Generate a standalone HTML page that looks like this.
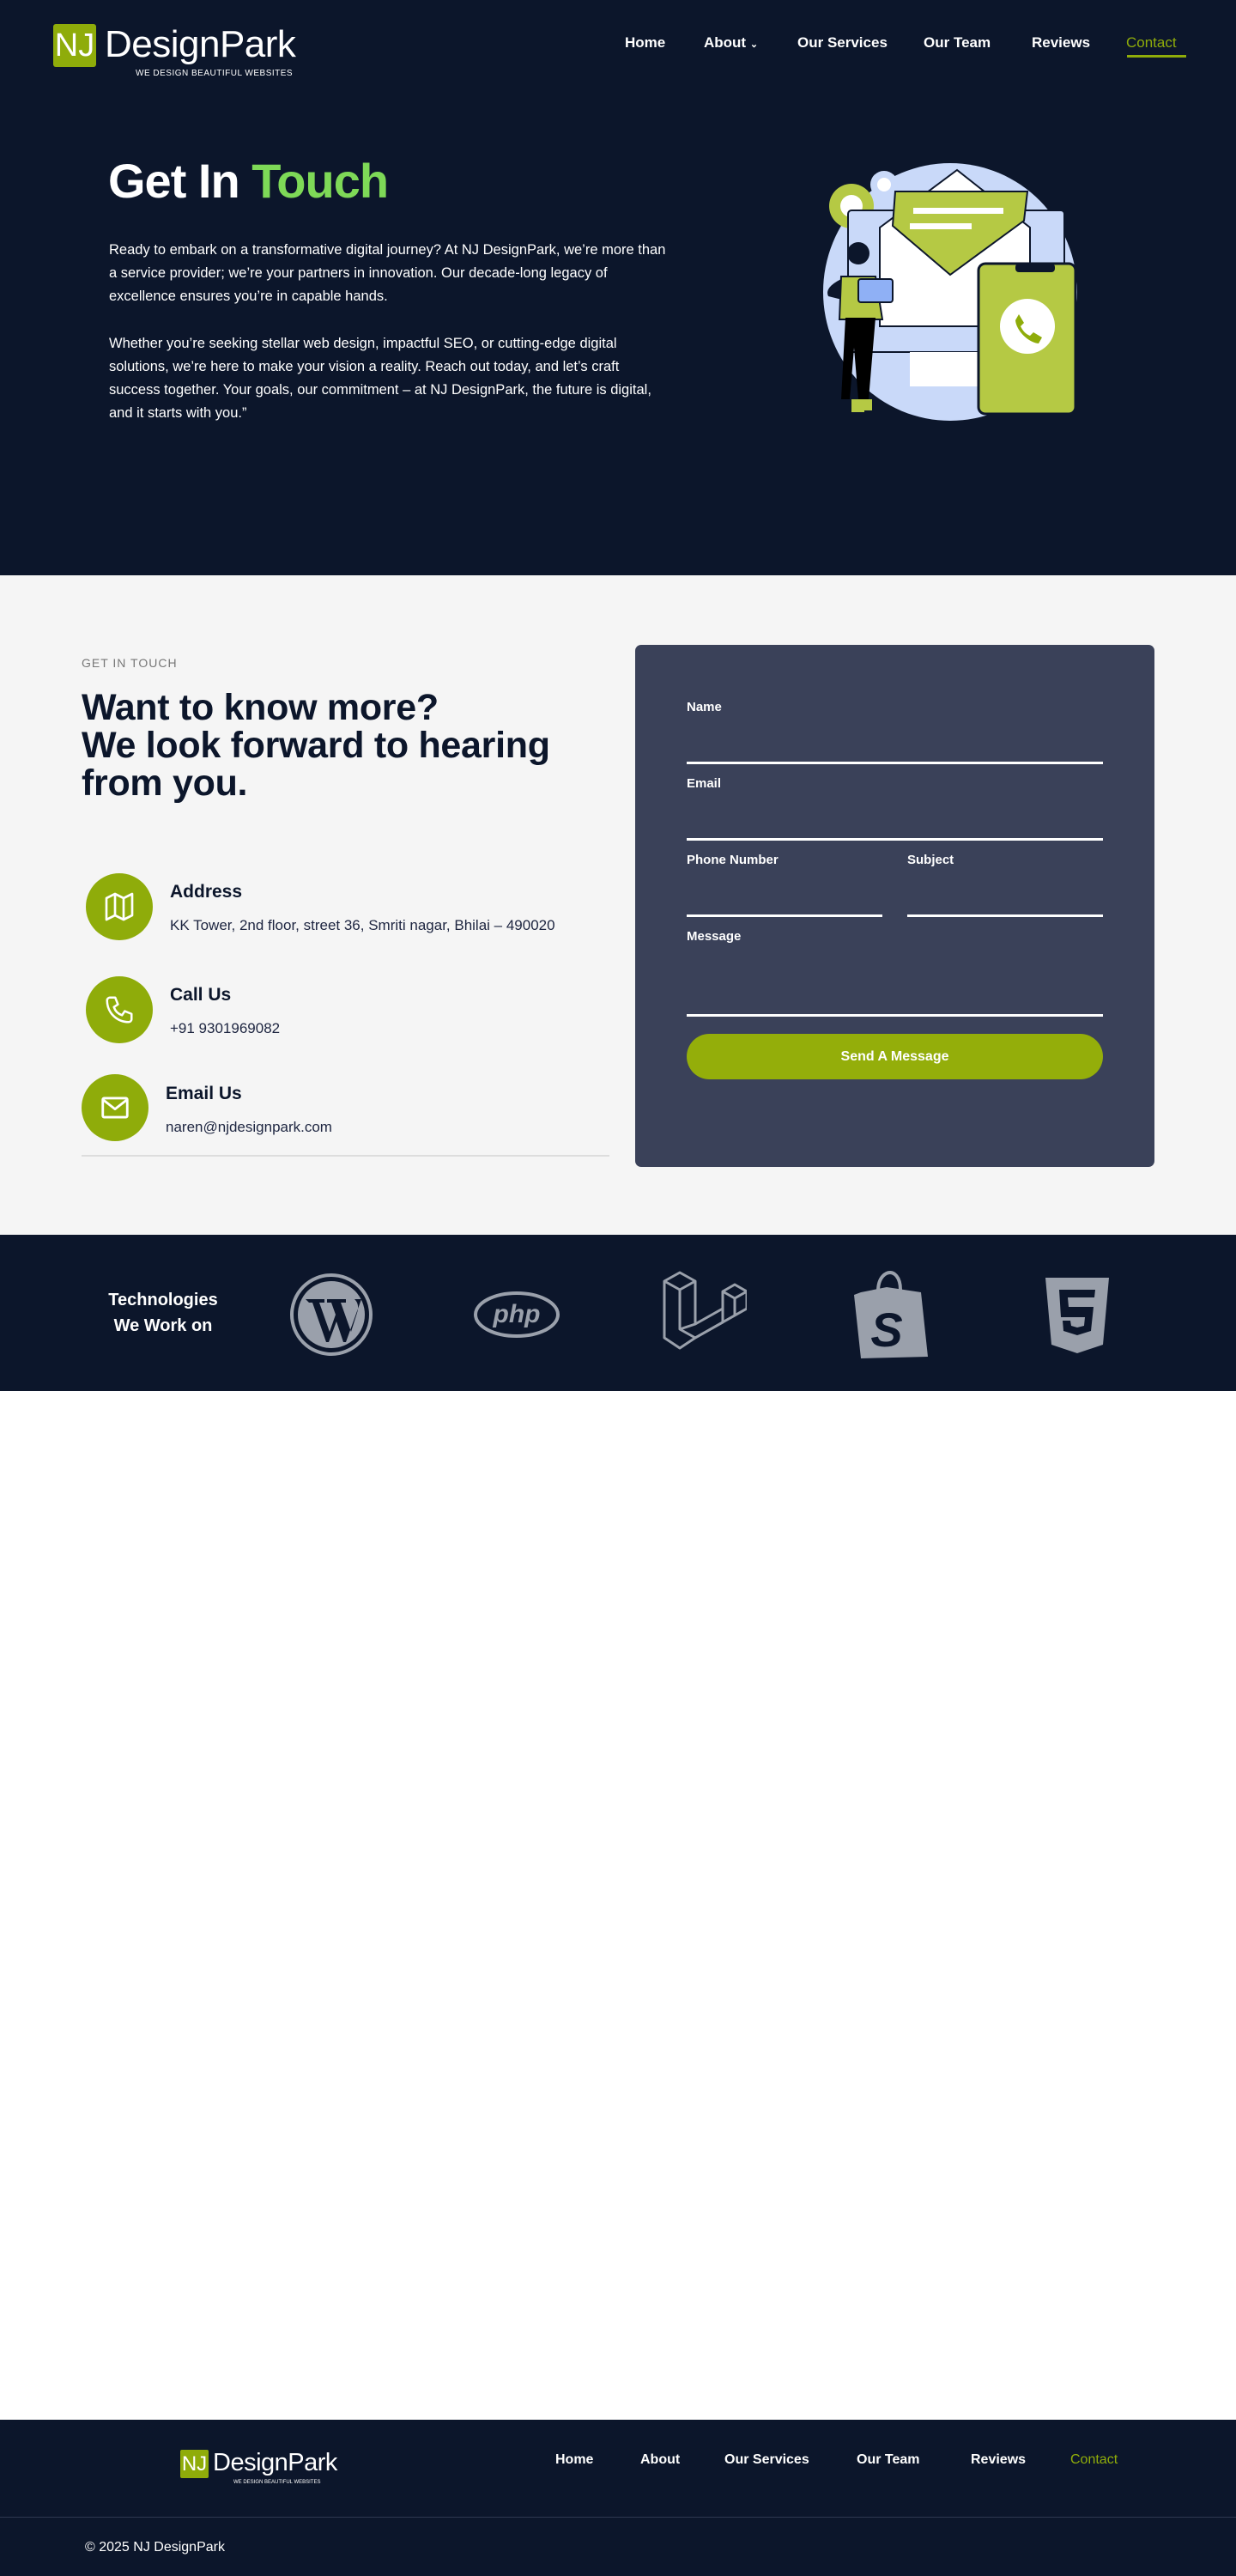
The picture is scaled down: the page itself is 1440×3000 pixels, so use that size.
<!DOCTYPE html>
<html><head><meta charset="utf-8"><style>
*{margin:0;padding:0;box-sizing:border-box}
body{width:1440px;height:3000px;background:#fff;font-family:"Liberation Sans",sans-serif;position:relative;overflow:hidden}
.abs{position:absolute}
.navy{background:#0c162b}
.nav a{color:#fff;font-weight:bold;font-size:17px;text-decoration:none;position:absolute;top:40px;white-space:nowrap}
.p{color:#fff;font-size:16.5px;line-height:27px}
.lbl{color:#fff;font-size:15px;font-weight:bold;position:absolute}
.ln{position:absolute;height:3px;background:#fff}
.circ{position:absolute;width:78px;height:78px;border-radius:50%;background:#8fac0a;display:flex;align-items:center;justify-content:center}
.ct{position:absolute;color:#0c162b;font-weight:bold;font-size:21px}
.cs{position:absolute;color:#1d2540;font-size:17px}
</style></head><body>
<div class="abs navy" style="left:0;top:0;width:1440px;height:670px"></div>
<div class="abs" style="left:62px;top:28px;width:50px;height:50px;background:#8fac0a;border-radius:3px;color:#fff;font-size:38px;line-height:50px;text-align:center">NJ</div>
<div class="abs" style="left:122px;top:26px;color:#fff;font-size:44px;line-height:52px;letter-spacing:-0.5px">DesignPark</div>
<div class="abs" style="left:158px;top:80px;color:#fff;font-size:10px;letter-spacing:0.5px">WE DESIGN BEAUTIFUL WEBSITES</div>
<div class="nav">
<a style="left:728px">Home</a>
<a style="left:820px">About <span style="font-size:11px">⌄</span></a>
<a style="left:929px">Our Services</a>
<a style="left:1076px">Our Team</a>
<a style="left:1202px">Reviews</a>
<a style="left:1312px;color:#8fac0a;font-weight:normal">Contact</a>
</div>
<div class="abs" style="left:1313px;top:64px;width:69px;height:3px;background:#8fac0a"></div>
<div class="abs" style="left:126px;top:178px;color:#fff;font-size:56px;font-weight:bold;letter-spacing:-1px">Get In <span style="color:#7ed957">Touch</span></div>
<div class="abs p" style="left:127px;top:278px;width:655px">Ready to embark on a transformative digital journey? At NJ DesignPark, we’re more than a service provider; we’re your partners in innovation. Our decade-long legacy of excellence ensures you’re in capable hands.</div>
<div class="abs p" style="left:127px;top:387px;width:655px">Whether you’re seeking stellar web design, impactful SEO, or cutting-edge digital solutions, we’re here to make your vision a reality. Reach out today, and let’s craft success together. Your goals, our commitment – at NJ DesignPark, the future is digital, and it starts with you.”</div>
<svg class="abs" style="left:940px;top:170px" width="340" height="330" viewBox="0 0 340 330">
<ellipse cx="167" cy="170" rx="148" ry="150" fill="#c9d9f9"/>
<circle cx="52" cy="70" r="26" fill="#b5c944"/><circle cx="52" cy="70" r="13" fill="#fff"/>
<circle cx="90" cy="45" r="16" fill="#c9d9f9"/><circle cx="90" cy="45" r="8" fill="#fff"/>
<rect x="48" y="75" width="252" height="165" rx="4" fill="#c9d9f9" stroke="#0c162b" stroke-width="2"/>
<rect x="120" y="240" width="80" height="40" fill="#fff"/>
<polygon points="85,95 175,28 260,95 260,210 85,210" fill="#fff" stroke="#0c162b" stroke-width="2"/>
<polygon points="103,53 257,53 253,87 167,150 100,93" fill="#b5c944" stroke="#0c162b" stroke-width="2"/>
<rect x="124" y="72" width="105" height="7" fill="#fff"/><rect x="120" y="90" width="72" height="7" fill="#fff"/>
<rect x="200" y="137" width="113" height="175" rx="8" fill="#b5c944" stroke="#0c162b" stroke-width="3"/>
<rect x="243" y="137" width="46" height="10" rx="4" fill="#0c162b"/>
<circle cx="257" cy="210" r="32" fill="#fff"/>
<path d="M247 196l6 10-4 4c3 6 6 9 11 11l4-4 10 6-4 7c-12-1-26-15-27-27z" fill="#8fac0a"/>
<circle cx="60" cy="125" r="13" fill="#0c162b"/><path d="M40 155 q-20 10-15 20 l20 5z" fill="#0c162b"/>
<path d="M40 152 h40 l8 50 h-50z" fill="#b5c944" stroke="#0c162b" stroke-width="2"/>
<rect x="60" y="155" width="40" height="27" rx="3" fill="#8fb0f5" stroke="#0c162b" stroke-width="2"/>
<path d="M45 200 h35 l-8 95 h-12 l-5-60 -5 60h-10z" fill="#000"/>
<rect x="52" y="295" width="15" height="15" fill="#b5c944"/><rect x="62" y="295" width="14" height="13" fill="#b5c944"/>
</svg>

<div class="abs" style="left:0;top:670px;width:1440px;height:768px;background:#f5f5f5"></div>
<div class="abs" style="left:95px;top:764px;color:#777;font-size:14px;letter-spacing:1px">GET IN TOUCH</div>
<div class="abs" style="left:95px;top:802px;color:#0c162b;font-size:43px;font-weight:bold;line-height:44px;letter-spacing:-0.3px">Want to know more?<br>We look forward to hearing<br>from you.</div>
<div class="circ" style="left:100px;top:1017px"><svg width="40" height="40" viewBox="0 0 24 24" fill="none" stroke="#fff" stroke-width="1.6" stroke-linejoin="round"><path d="M3 6l6-3 6 3 6-3v15l-6 3-6-3-6 3z M9 3v15 M15 6v15"/></svg></div>
<div class="ct" style="left:198px;top:1027px">Address</div>
<div class="cs" style="left:198px;top:1068px">KK Tower, 2nd floor, street 36, Smriti nagar, Bhilai – 490020</div>
<div class="circ" style="left:100px;top:1137px"><svg width="38" height="38" viewBox="0 0 24 24" fill="none" stroke="#fff" stroke-width="1.6" stroke-linejoin="round"><path d="M5 3h4l2 5-3 2c1 3 3 5 6 6l2-3 5 2v4c0 1-1 2-2 2C10 21 3 14 3 5c0-1 1-2 2-2z"/></svg></div>
<div class="ct" style="left:198px;top:1147px">Call Us</div>
<div class="cs" style="left:198px;top:1188px">+91 9301969082</div>
<div class="circ" style="left:95px;top:1251px"><svg width="38" height="38" viewBox="0 0 24 24" fill="none" stroke="#fff" stroke-width="1.8" stroke-linejoin="round"><rect x="3" y="5" width="18" height="14" rx="1"/><path d="M3 6l9 7 9-7"/></svg></div>
<div class="ct" style="left:193px;top:1262px">Email Us</div>
<div class="cs" style="left:193px;top:1303px">naren@njdesignpark.com</div>
<div class="abs" style="left:95px;top:1345px;width:615px;height:2px;background:#ddd"></div>

<div class="abs" style="left:740px;top:751px;width:605px;height:608px;background:#3a4159;border-radius:7px"></div>
<div class="lbl" style="left:800px;top:815px">Name</div><div class="ln" style="left:800px;top:887px;width:485px"></div>
<div class="lbl" style="left:800px;top:904px">Email</div><div class="ln" style="left:800px;top:976px;width:485px"></div>
<div class="lbl" style="left:800px;top:993px">Phone Number</div><div class="ln" style="left:800px;top:1065px;width:228px"></div>
<div class="lbl" style="left:1057px;top:993px">Subject</div><div class="ln" style="left:1057px;top:1065px;width:228px"></div>
<div class="lbl" style="left:800px;top:1082px">Message</div><div class="ln" style="left:800px;top:1181px;width:485px"></div>
<div class="abs" style="left:800px;top:1204px;width:485px;height:53px;border-radius:27px;background:#94ae0a;color:#fff;font-weight:bold;font-size:16px;line-height:53px;text-align:center">Send A Message</div>

<div class="abs navy" style="left:0;top:1438px;width:1440px;height:182px"></div>
<div class="abs" style="left:100px;top:1499px;width:180px;text-align:center;color:#fff;font-weight:bold;font-size:20px;line-height:30px">Technologies<br>We Work on</div>
<svg class="abs" style="left:336px;top:1481px" width="100" height="100" viewBox="0 0 100 100"><circle cx="50" cy="50" r="46" fill="none" stroke="#9aa0ab" stroke-width="4"/><circle cx="50" cy="50" r="39" fill="#9aa0ab"/><path d="M20 32h22v4h-6l12 34 7-20-5-14h-5v-4h22v4h-6l12 34 7-22c3-10-1-14-3-16h8l-18 50h-3l-8-24-9 24h-3l-16-46h-4z" fill="#0c162b"/></svg>
<svg class="abs" style="left:551px;top:1503px" width="102" height="56" viewBox="0 0 102 56"><ellipse cx="51" cy="28" rx="48" ry="25" fill="none" stroke="#9aa0ab" stroke-width="4"/><text x="51" y="37" text-anchor="middle" font-family="Liberation Sans" font-style="italic" font-weight="bold" font-size="30" fill="#9aa0ab">php</text></svg>
<svg class="abs" style="left:770px;top:1478px" width="100" height="102" viewBox="0 0 100 102" fill="none" stroke="#9aa0ab" stroke-width="3" stroke-linejoin="round"><path d="M4 14L22 4L40 14V64L72 46V26L86 18L100 26V46L40 80L22 92L4 80Z"/><path d="M4 14L22 24L40 14M22 24V70L40 80M22 70L40 64M72 26L86 34L100 26M86 34V54M40 80L72 62V46"/></svg>
<svg class="abs" style="left:993px;top:1480px" width="90" height="102" viewBox="0 0 90 102"><path d="M10 25l30-6 40 6 8 75-78 2-8-74z" fill="#9aa0ab"/><path d="M30 24c0-18 10-22 14-22s12 4 12 20" fill="none" stroke="#9aa0ab" stroke-width="4"/><text x="40" y="88" text-anchor="middle" font-family="Liberation Sans" font-weight="bold" font-style="italic" font-size="56" fill="#0c162b">S</text></svg>
<svg class="abs" style="left:1216px;top:1486px" width="78" height="92" viewBox="0 0 78 92"><path d="M2 2h74l-7 78-30 10-30-10z" fill="#9aa0ab"/><path d="M18 16h42l-1 9H28l1 11h29l-3 28-16 5-16-5-1-12h9l1 6 7 2 8-2 1-10H20z" fill="#0c162b"/></svg>

<div class="abs navy" style="left:0;top:2818px;width:1440px;height:182px"></div>
<div class="abs" style="left:210px;top:2853px;width:33px;height:33px;background:#8fac0a;border-radius:2px;color:#fff;font-size:24px;line-height:33px;text-align:center">NJ</div>
<div class="abs" style="left:248px;top:2852px;color:#fff;font-size:29px;letter-spacing:-0.5px">DesignPark</div>
<div class="abs" style="left:272px;top:2888px;color:#fff;font-size:6px">WE DESIGN BEAUTIFUL WEBSITES</div>
<div class="nav" style="position:absolute;left:0;top:2816px">
<a style="left:647px;font-size:16px">Home</a>
<a style="left:746px;font-size:16px">About</a>
<a style="left:844px;font-size:16px">Our Services</a>
<a style="left:998px;font-size:16px">Our Team</a>
<a style="left:1131px;font-size:16px">Reviews</a>
<a style="left:1247px;font-size:16px;color:#8fac0a;font-weight:normal">Contact</a>
</div>
<div class="abs" style="left:0;top:2931px;width:1440px;height:1px;background:#2f3850"></div>
<div class="abs" style="left:99px;top:2958px;color:#fff;font-size:16px">© 2025 NJ DesignPark</div>
</body></html>
